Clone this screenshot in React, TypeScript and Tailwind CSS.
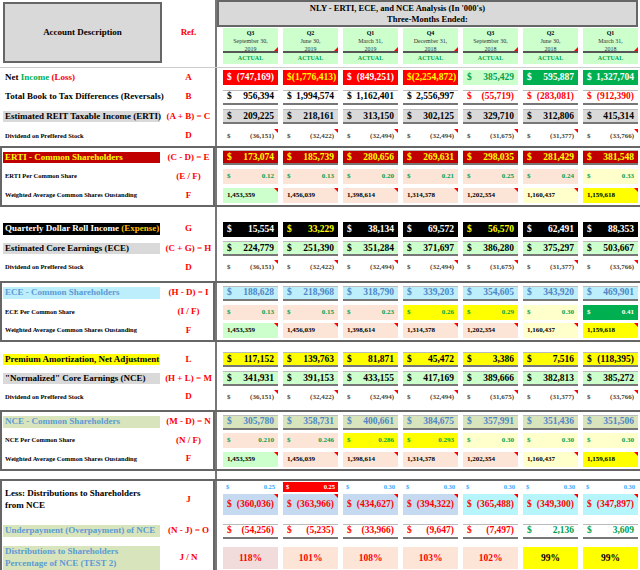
import React from "react";

type C = [string, string, string];
const PE = "bg-[#fce4d6]", LY = "bg-[#ffffcc]", YE = "bg-[#ffff00]", LG = "bg-[#ccffcc]", GR = "bg-[#00b050]";
const gT = "text-[#00a050]", rT = "text-[#ff0000]", bT = "text-[#4f86c6]", kT = "text-black", wT = "text-white", yT = "text-[#ffff00]";

function mk(bgs: string[], cols: string[], vals: string[]): C[] {
  return vals.map((v, i) => [bgs[i] ?? bgs[0], cols[i] ?? cols[0], v]);
}
const weighted = mk([LG, PE, PE, PE, PE, LY, YE], [kT], ["1,453,359", "1,456,039", "1,398,614", "1,314,378", "1,202,354", "1,160,437", "1,159,618"]);
const divid = mk(["bg-white"], ["text-[#444]"], ["(36,151)", "(32,422)", "(32,494)", "(32,494)", "(31,675)", "(31,377)", "(33,766)"]);

function Cell({ c, big, dollar = true, line, tri, center, h = "h-[15px]" }: { c: C; big?: boolean; dollar?: boolean; line?: boolean; tri?: boolean; center?: boolean; h?: string }) {
  return (
    <div className={`relative w-[55px] ${h} ${c[0]} ${c[1]} flex items-center ${center ? "justify-center" : "justify-between"} px-[4px] ${big ? "text-[9.5px] font-bold" : "text-[7px] font-bold"} ${line ? "border-t border-b-2 border-t-[#bbb] border-b-[#777]" : ""} whitespace-nowrap`}>
      {dollar && !center && <span>$</span>}
      <span>{c[2]}</span>
      {tri && <span className="absolute right-0 top-0 w-0 h-0 border-l-[4px] border-l-transparent border-t-[4px] border-t-[#ff0000]" />}
    </div>
  );
}

function Row({ h, label, lcls = "", lsize = "big", refTxt, cells, big = true, line = true, tri, dollar = true, center, ch, wrap }: any) {
  return (
    <div className={`flex ${h}`}>
      <div className="w-[215px] flex items-center shrink-0">
        <div className="w-[162px] pl-[3px] pr-[2px] flex items-center">
          <div className={`${lcls} ${lsize === "big" ? "text-[9px]" : "text-[6.5px]"} ${wrap ? "" : "whitespace-nowrap"} font-bold leading-[1.3] w-full px-[2px]`}>{label}</div>
        </div>
        <div className="w-[53px] text-center text-[9px] font-bold text-[#ff0000] whitespace-nowrap">{refTxt}</div>
      </div>
      <div className="flex-1 border-l-2 border-[#777] flex items-center gap-[5px] pl-[6px]">
        {cells.map((c: C, i: number) => <Cell key={i} c={c} big={big} line={line} tri={tri} dollar={dollar} center={center} h={ch} />)}
      </div>
    </div>
  );
}

function Box({ children }: { children: React.ReactNode }) {
  return (
    <div className="relative border-y-2 border-[#666]">
      <div className="absolute left-0 top-0 bottom-0 w-[215px] border-x-2 border-[#666] pointer-events-none" />
      {children}
    </div>
  );
}
const Gap = ({ h }: { h: string }) => (
  <div className={`flex ${h}`}><div className="w-[215px]" /><div className="flex-1 border-l-2 border-[#777]" /></div>
);

const heads = [["Q3", "September 30,", "2019"], ["Q2", "June 30,", "2019"], ["Q1", "March 31,", "2019"], ["Q4", "December 31,", "2018"], ["Q3", "September 30,", "2018"], ["Q2", "June 30,", "2018"], ["Q1", "March 31,", "2018"]];

export default function App() {
  return (
    <div className="w-[640px] h-[570px] bg-white overflow-hidden text-black" style={{ fontFamily: '"Liberation Serif", serif' }}>
      <div className="flex h-[68px] border-b border-[#ccc]">
        <div className="w-[215px] flex items-start pt-[2px]">
          <div className="ml-[3px] w-[159px] h-[61px] bg-[#d9d9d9] border-2 border-[#666] flex items-center justify-center text-[9px] font-bold">Account Description</div>
          <div className="w-[53px] h-[61px] flex items-center justify-center text-[9px] font-bold text-[#ff0000]">Ref.</div>
        </div>
        <div className="flex-1 border-l-2 border-[#777] flex flex-col">
          <div className="h-[27px] mr-[2px] bg-[#d9d9d9] border-2 border-[#666] flex flex-col items-center justify-center text-[8.5px] font-bold leading-[1.2]">
            <div className="-ml-[60px]">NLY - ERTI, ECE, and NCE Analysis (In '000's)</div>
            <div>Three-Months Ended:</div>
          </div>
          <div className="flex gap-[5px] pl-[6px] pt-[1px]">
            {heads.map((q, i) => (
              <div key={i} className="w-[55px] bg-[#ccffcc] text-center">
                <div className="relative h-[25px] border-b-2 border-[#555] text-[6px] leading-[8px] text-[#333] pt-[1px]">
                  <div className="font-bold text-black">{q[0]}</div><div>{q[1]}</div><div>{q[2]}</div>
                  <span className="absolute right-0 bottom-0 w-0 h-0 border-l-[4px] border-l-transparent border-b-[4px] border-b-[#ff0000]" />
                </div>
                <div className="h-[11px] text-[6px] font-bold text-[#00a050] leading-[11px]">ACTUAL</div>
              </div>
            ))}
          </div>
        </div>
      </div>

      <Row h="h-[19px]" label={<span>Net <span className="text-[#00b050]">Income</span> <span className="text-[#ff0000]">(Loss)</span></span>} refTxt="A" line={false}
        cells={mk(["bg-[#ff0000]", "bg-[#ff0000]", "bg-[#ff0000]", "bg-[#ff0000]", LG, GR, GR], [wT, yT, wT, yT, gT, wT, wT], ["(747,169)", "(1,776,413)", "(849,251)", "(2,254,872)", "385,429", "595,887", "1,327,704"])} />
      <Row h="h-[20px]" label="Total Book to Tax Differences (Reversals)" refTxt="B"
        cells={mk(["bg-white"], [kT, kT, kT, kT, rT, rT, rT], ["956,394", "1,994,574", "1,162,401", "2,556,997", "(55,719)", "(283,081)", "(912,390)"])} />
      <Row h="h-[19px]" label="Estimated REIT Taxable Income (ERTI)" lcls="bg-[#d9d9d9]" refTxt="(A + B) = C"
        cells={mk(["bg-[#d9d9d9]"], [kT], ["209,225", "218,161", "313,150", "302,125", "329,710", "312,806", "415,314"])} />
      <Row h="h-[20px]" label="Dividend on Preffered Stock" lsize="s" refTxt="D" big={false} line={false} tri cells={divid} />
      <Box>
        <Row h="h-[19px]" label="ERTI - Common Shareholders" lcls="bg-[#c00000] text-[#ffff00]" refTxt="(C - D) = E"
          cells={mk(["bg-[#c00000]"], [yT], ["173,074", "185,739", "280,656", "269,631", "298,035", "281,429", "381,548"])} />
        <Row h="h-[19px]" label="ERTI Per Common Share" lsize="s" refTxt="(E / F)" big={false} line={false}
          cells={mk([PE, PE, PE, PE, PE, PE, LY], [gT], ["0.12", "0.13", "0.20", "0.21", "0.25", "0.24", "0.33"])} />
        <Row h="h-[19px]" label="Weighted Average Common Shares Oustanding" lsize="s" refTxt="F" big={false} line={false} tri dollar={false} cells={weighted} />
      </Box>
      <Gap h="h-[12px]" />
      <Row h="h-[20px]" label={<span>Quarterly Dollar Roll Income <span className="text-[#ffc000]">(Expense)</span></span>} lcls="bg-black text-white" refTxt="G" line={false}
        cells={mk(["bg-black"], [wT, yT, wT, wT, yT, wT, wT], ["15,554", "33,229", "38,134", "69,572", "56,570", "62,491", "88,353"])} />
      <Row h="h-[19px]" label="Estimated Core Earnings (ECE)" lcls="bg-[#d9d9d9]" refTxt="(C + G) = H"
        cells={mk([LG], [kT], ["224,779", "251,390", "351,284", "371,697", "386,280", "375,297", "503,667"])} />
      <Row h="h-[19px]" label="Dividend on Preffered Stock" lsize="s" refTxt="D" big={false} line={false} tri cells={divid} />
      <Gap h="h-[4px]" />
      <Box>
        <Row h="h-[20px]" label="ECE - Common Shareholders" lcls="bg-[#bdeefc] text-[#5b9bd5]" refTxt="(H - D) = I"
          cells={mk(["bg-[#bdeefc]"], [bT], ["188,628", "218,968", "318,790", "339,203", "354,605", "343,920", "469,901"])} />
        <Row h="h-[18px]" label="ECE Per Common Share" lsize="s" refTxt="(I / F)" big={false} line={false}
          cells={mk([PE, PE, PE, YE, YE, LY, GR], [gT, gT, gT, gT, gT, gT, wT], ["0.13", "0.15", "0.23", "0.26", "0.29", "0.30", "0.41"])} />
        <Row h="h-[19px]" label="Weighted Average Common Shares Oustanding" lsize="s" refTxt="F" big={false} line={false} tri dollar={false} cells={weighted} />
      </Box>
      <Gap h="h-[8px]" />
      <Row h="h-[19px]" label="Premium Amortization, Net Adjustment" lcls="bg-[#ffff00]" refTxt="L"
        cells={mk([YE], [kT], ["117,152", "139,763", "81,871", "45,472", "3,386", "7,516", "(118,395)"])} />
      <Row h="h-[19px]" label={'"Normalized" Core Earnings (NCE)'} lcls="bg-[#d9d9d9]" refTxt="(H + L) = M"
        cells={mk([LG], [kT], ["341,931", "391,153", "433,155", "417,169", "389,666", "382,813", "385,272"])} />
      <Row h="h-[18px]" label="Dividend on Preffered Stock" lsize="s" refTxt="D" big={false} line={false} tri cells={divid} />
      <Gap h="h-[4px]" />
      <Box>
        <Row h="h-[20px]" label="NCE - Common Shareholders" lcls="bg-[#d8e4bc] text-[#5b9bd5]" refTxt="(M - D) = N"
          cells={mk(["bg-[#d8e4bc]"], [bT], ["305,780", "358,731", "400,661", "384,675", "357,991", "351,436", "351,506"])} />
        <Row h="h-[17px]" label="NCE Per Common Share" lsize="s" refTxt="(N / F)" big={false} line={false}
          cells={mk([PE, PE, YE, YE, LY, LY, LY], [gT], ["0.210", "0.246", "0.286", "0.293", "0.30", "0.30", "0.30"])} />
        <Row h="h-[20px]" label="Weighted Average Common Shares Oustanding" lsize="s" refTxt="F" big={false} line={false} tri dollar={false} cells={weighted} />
      </Box>
      <Gap h="h-[8px]" />
      <Box>
        <div className="flex h-[38px]">
          <div className="w-[215px] flex items-center shrink-0">
            <div className="w-[162px] pl-[5px] pr-[4px] text-[9px] font-bold leading-[1.3]">Less: Distributions to Shareholders from NCE</div>
            <div className="w-[53px] text-center text-[9px] font-bold text-[#ff0000]">J</div>
          </div>
          <div className="flex-1 border-l-2 border-[#777] flex gap-[5px] pl-[6px] pt-[1px]">
            {[["(360,036)", "0.25"], ["(363,966)", "0.25"], ["(434,627)", "0.30"], ["(394,322)", "0.30"], ["(365,488)", "0.30"], ["(349,300)", "0.30"], ["(347,897)", "0.30"]].map((v, i) => (
              <div key={i} className="w-[55px] flex flex-col gap-[2px]">
                <div className={`h-[10px] flex justify-between px-[3px] text-[6.5px] font-bold items-center ${i === 1 ? "bg-[#ff0000] text-white" : "text-[#33aaff]"}`}><span>$</span><span>{v[1]}</span></div>
                <Cell c={[i < 4 ? "bg-[#c5d9f1]" : "bg-[#b7f5fd]", rT, v[0]]} big tri h="h-[21px]" />
              </div>
            ))}
          </div>
        </div>
        <Row h="h-[24px]" label="Underpayment (Overpayment) of NCE" lcls="bg-[#d8e4bc] text-[#5b9bd5]" refTxt="(N - J) = O"
          cells={mk(["bg-white"], [rT, rT, rT, rT, rT, gT, gT], ["(54,256)", "(5,235)", "(33,966)", "(9,647)", "(7,497)", "2,136", "3,609"])} />
        <Row h="h-[30px]" wrap label="Distributions to Shareholders Percentage of NCE   (TEST 2)" lcls="bg-[#d8e4bc] text-[#5b9bd5]" refTxt="J / N" line={false} center ch="h-[22px]"
          cells={mk(["bg-[#f2dcdb]", PE, PE, PE, PE, YE, YE], [rT, rT, rT, rT, rT, kT, kT], ["118%", "101%", "108%", "103%", "102%", "99%", "99%"])} />
        <div className="h-[4px]" />
      </Box>
    </div>
  );
}
